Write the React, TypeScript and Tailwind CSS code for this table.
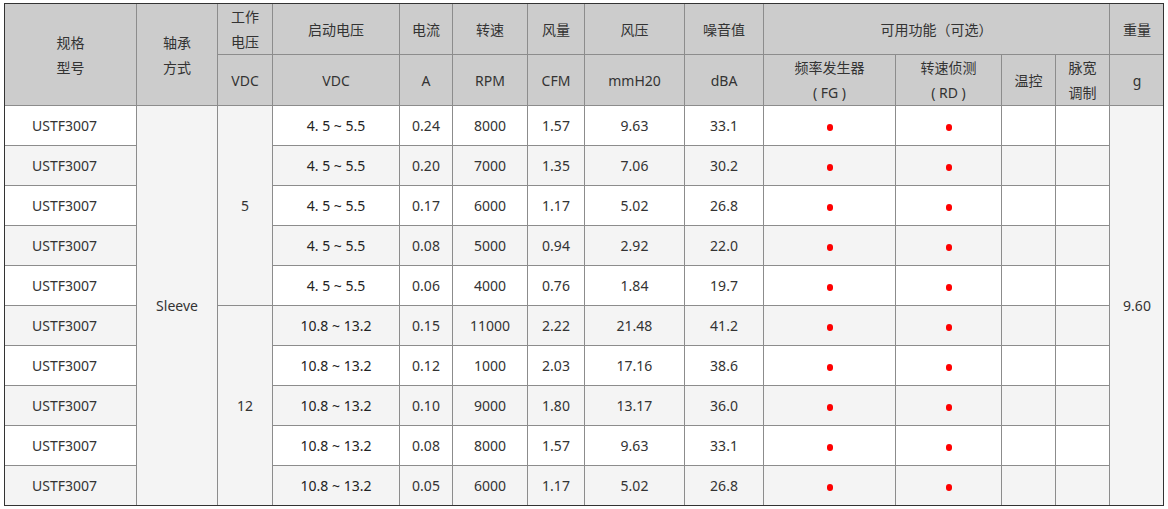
import React from 'react';

type Row = {
  start: string;
  amp: string;
  rpm: string;
  cfm: string;
  pressure: string;
  noise: string;
};

const ROWS: Row[] = [
  { start: '4. 5 ~ 5.5', amp: '0.24', rpm: '8000', cfm: '1.57', pressure: '9.63', noise: '33.1' },
  { start: '4. 5 ~ 5.5', amp: '0.20', rpm: '7000', cfm: '1.35', pressure: '7.06', noise: '30.2' },
  { start: '4. 5 ~ 5.5', amp: '0.17', rpm: '6000', cfm: '1.17', pressure: '5.02', noise: '26.8' },
  { start: '4. 5 ~ 5.5', amp: '0.08', rpm: '5000', cfm: '0.94', pressure: '2.92', noise: '22.0' },
  { start: '4. 5 ~ 5.5', amp: '0.06', rpm: '4000', cfm: '0.76', pressure: '1.84', noise: '19.7' },
  { start: '10.8 ~ 13.2', amp: '0.15', rpm: '11000', cfm: '2.22', pressure: '21.48', noise: '41.2' },
  { start: '10.8 ~ 13.2', amp: '0.12', rpm: '1000', cfm: '2.03', pressure: '17.16', noise: '38.6' },
  { start: '10.8 ~ 13.2', amp: '0.10', rpm: '9000', cfm: '1.80', pressure: '13.17', noise: '36.0' },
  { start: '10.8 ~ 13.2', amp: '0.08', rpm: '8000', cfm: '1.57', pressure: '9.63', noise: '33.1' },
  { start: '10.8 ~ 13.2', amp: '0.05', rpm: '6000', cfm: '1.17', pressure: '5.02', noise: '26.8' },
];

const COLS = [132, 81, 55, 127, 53, 75, 57, 100, 79, 132, 106, 54, 54, 55];

const th = 'border border-[#8c8c8c] bg-[#cccccc] font-normal text-center align-middle p-0 leading-[25px]';
const td = 'border border-[#8c8c8c] text-center align-middle p-0';
const merged = 'border border-[#8c8c8c] text-center align-middle p-0 bg-[#f4f4f4]';

function Dot() {
  return <span className="inline-block w-[6px] h-[7px] rounded-full bg-[#ff0000] align-middle" />;
}

export default function App() {
  return (
    <div className="w-[1168px] h-[509px] bg-white pt-[3px] pl-1 font-['Noto_Sans','Noto_Sans_CJK_SC',sans-serif] text-[14px] text-[#333]">
      <div className="w-[1160px] h-[503px] border border-[#333] overflow-hidden">
        <table className="-m-px w-[1160px] table-fixed border-collapse">
          <colgroup>
            {COLS.map((w, i) => (
              <col key={i} style={{ width: w }} />
            ))}
          </colgroup>
          <thead>
            <tr className="h-[51px]">
              <th rowSpan={2} className={th}>
                规格
                <br />
                型号
              </th>
              <th rowSpan={2} className={th}>
                轴承
                <br />
                方式
              </th>
              <th className={th}>
                工作
                <br />
                电压
              </th>
              <th className={th}>启动电压</th>
              <th className={th}>电流</th>
              <th className={th}>转速</th>
              <th className={th}>风量</th>
              <th className={th}>风压</th>
              <th className={th}>噪音值</th>
              <th colSpan={4} className={th}>
                可用功能（可选）
              </th>
              <th className={th}>重量</th>
            </tr>
            <tr className="h-[51px]">
              <th className={th}>VDC</th>
              <th className={th}>VDC</th>
              <th className={th}>A</th>
              <th className={th}>RPM</th>
              <th className={th}>CFM</th>
              <th className={th}>mmH20</th>
              <th className={th}>dBA</th>
              <th className={th}>
                频率发生器
                <br />( FG )
              </th>
              <th className={th}>
                转速侦测
                <br />( RD )
              </th>
              <th className={th}>温控</th>
              <th className={th}>
                脉宽
                <br />
                调制
              </th>
              <th className={th}>g</th>
            </tr>
          </thead>
          <tbody>
            {ROWS.map((r, i) => (
              <tr key={i} className={`h-10 ${i % 2 === 1 ? 'bg-[#f4f4f4]' : 'bg-white'}`}>
                <td className={`${td} pr-3`}>USTF3007</td>
                {i === 0 && (
                  <td rowSpan={10} className={merged}>
                    Sleeve
                  </td>
                )}
                {i === 0 && (
                  <td rowSpan={5} className={merged}>
                    5
                  </td>
                )}
                {i === 5 && (
                  <td rowSpan={5} className={merged}>
                    12
                  </td>
                )}
                <td className={`${td} text-[#222]`}>{r.start}</td>
                <td className={td}>{r.amp}</td>
                <td className={td}>{r.rpm}</td>
                <td className={td}>{r.cfm}</td>
                <td className={td}>{r.pressure}</td>
                <td className={td}>{r.noise}</td>
                <td className={td}>
                  <Dot />
                </td>
                <td className={td}>
                  <Dot />
                </td>
                <td className={td}></td>
                <td className={td}></td>
                {i === 0 && (
                  <td rowSpan={10} className={merged}>
                    9.60
                  </td>
                )}
              </tr>
            ))}
          </tbody>
        </table>
      </div>
    </div>
  );
}
